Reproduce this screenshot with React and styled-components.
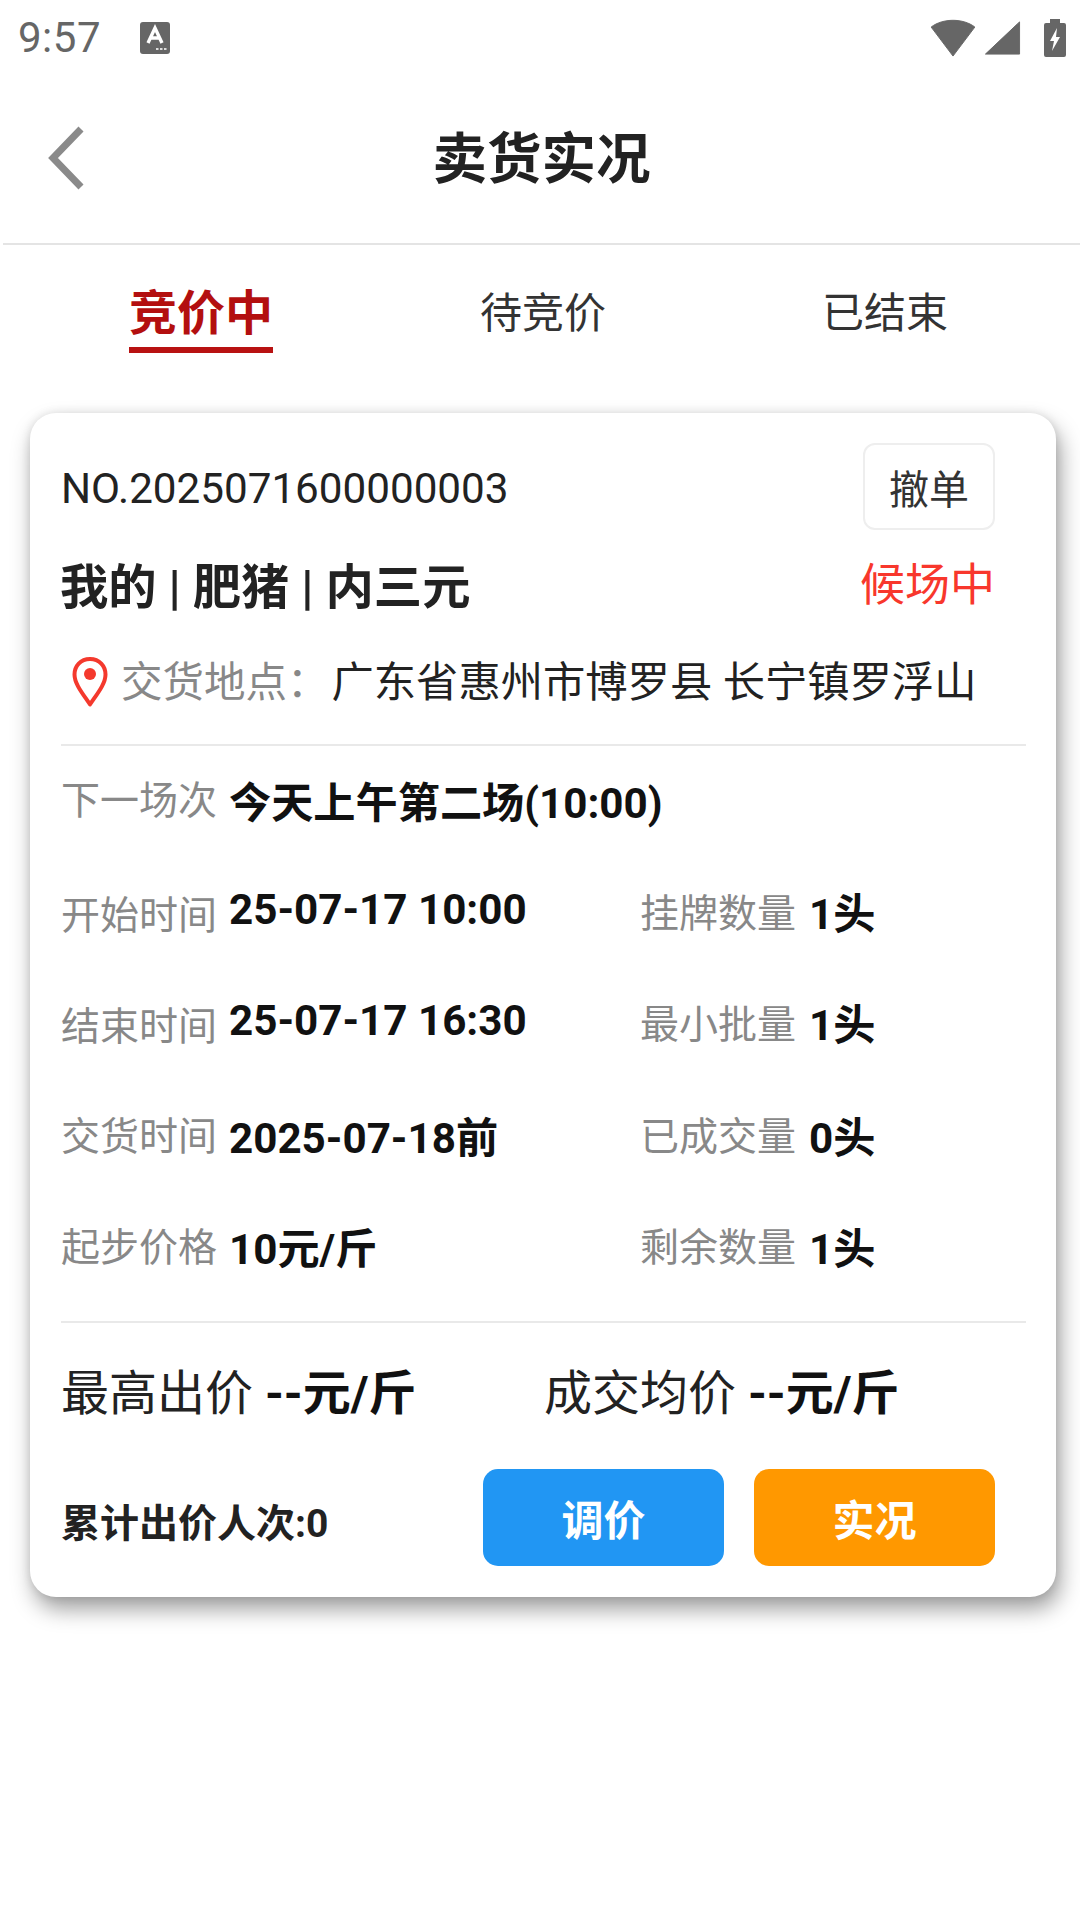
import React from "react";
import styled, { createGlobalStyle } from "styled-components";

const Global = createGlobalStyle`
  html, body { margin: 0; padding: 0; background: #fff; }
  body { font-family: Roboto, "Noto Sans CJK SC", sans-serif; color: #222; width: 1080px; height: 1920px; overflow: hidden; }
  * { box-sizing: border-box; }
`;

const Page = styled.div`width: 1080px; height: 1920px; background: #fff; display: flex; flex-direction: column;`;

const StatusBar = styled.div`height: 75px; display: flex; align-items: center; padding: 0 13px 0 18px; color: #666;`;
const Clock = styled.span`font-size: 42px; line-height: 75px; letter-spacing: .5px; width: 121px;`;
const StatusRight = styled.div`margin-left: auto; display: flex; align-items: center;`;
const Signal = styled.svg`margin-left: ${p => p.$gap || 0}px; display: block;`;

const Nav = styled.header`
  height: 170px; margin-left: 3px; border-bottom: 2px solid #e4e4e4;
  display: grid; grid-template-columns: 1fr auto 1fr; align-items: center;
`;
const Back = styled.svg`width: 40px; height: 64px; margin-left: 41px; margin-bottom: 3px; display: block;`;
const Title = styled.h1`margin: 0; font-size: 54.5px; line-height: 60px; font-weight: 700; color: #222;`;

const Tabs = styled.nav`height: 168px; padding: 38px 24px 0 30px; display: grid; grid-template-columns: repeat(3, 1fr); align-items: start; justify-items: center;`;
const Tab = styled.div`
  display: flex; flex-direction: column; align-items: center;
  font-size: ${p => (p.$active ? 48 : 42)}px;
  font-weight: ${p => (p.$active ? 700 : 400)};
  color: ${p => (p.$active ? "#b30f0f" : "#333")};
  line-height: 62px;
`;
const Underline = styled.span`display: block; width: 144px; height: 6px; background: #b81212; margin-top: 2px;`;

const Card = styled.section`
  width: 1026px; height: 1184px; margin-left: 30px; background: #fff; border-radius: 26px;
  box-shadow: 4px 12px 22px rgba(0,0,0,.38), 0 0 10px rgba(0,0,0,.1);
  padding: 30px 30px 31px 31px; display: flex; flex-direction: column;
`;
const HeadRow = styled.div`height: 87px; padding-right: 31px; display: flex; align-items: center; justify-content: space-between;`;
const OrderNo = styled.span`font-size: 42.2px; color: #222; line-height: 50px; margin-top: 5px;`;
const Revoke = styled.button`
  width: 132px; height: 87px; background: #fff; border: 2px solid #eee; border-radius: 12px;
  font: 400 40px Roboto, "Noto Sans CJK SC", sans-serif; color: #333; padding: 0;
`;
const TitleRow = styled.div`height: 60px; margin-top: 26px; padding-right: 31px; display: flex; align-items: center; justify-content: space-between;`;
const Product = styled.span`font-size: 48.3px; font-weight: 700; color: #222; line-height: 60px; margin-top: 4px; margin-left: -1px;`;
const State = styled.span`font-size: 45px; color: #f8372c; line-height: 60px;`;
const LocRow = styled.div`height: 50px; margin-top: 41px; padding-left: 11px; display: flex; align-items: center; font-size: 42.3px; line-height: 50px; color: #222; white-space: nowrap;`;
const Pin = styled.svg`width: 36px; height: 50px; margin-right: 13px; flex: none;`;
const LocLabel = styled.span`color: #888; font-size: 41.5px; margin-top: 2px;`;
const LocValue = styled.span`margin-top: 2px; margin-left: 3px;`;
const Rule = styled.hr`margin: ${p => p.$top}px 0 0; width: 965px; height: 2px; border: 0; background: #e9e9e9; flex: none;`;

const InfoRow = styled.div`height: 60px; margin-top: 26px; display: flex; align-items: center; white-space: nowrap;`;
const InfoGrid = styled.div`margin-top: 53px; display: grid; grid-template-columns: 168px 411px 169px auto; grid-auto-rows: 60px; row-gap: 51px; align-items: center; white-space: nowrap;`;
const Label = styled.span`
  font-size: 39px; line-height: 48px; color: #888; width: 168px;
  margin-top: ${p => p.$shift || 0}px;
`;
const Value = styled.span`
  font-size: 42.2px; line-height: 48px; font-weight: 700; color: #111;
  margin-top: ${p => p.$shift || 0}px;
`;

const Prices = styled.div`height: 60px; margin-top: 39px; display: grid; grid-template-columns: 483px auto; align-items: center; font-size: 48px; line-height: 60px; color: #222; white-space: nowrap; padding-top: 2px;`;
const PriceValue = styled.b`font-weight: 700; color: #111;`;

const Actions = styled.div`height: 97px; margin-top: 47px; padding-right: 31px; display: flex; align-items: center; white-space: nowrap;`;
const Bidders = styled.span`font-size: 39px; font-weight: 700; color: #222; margin-right: auto; margin-top: 5px;`;
const ActionBtn = styled.button`
  width: 241px; height: 97px; border: 0; border-radius: 15px; padding: 0; margin-left: ${p => p.$gap || 0}px;
  background: ${p => p.$bg}; color: #fff; font: 700 42px Roboto, "Noto Sans CJK SC", sans-serif;
`;

const rows = [
  ["开始时间", "25-07-17 10:00", "挂牌数量", "1头", 2, -11, -2, 0],
  ["结束时间", "25-07-17 16:30", "最小批量", "1头", 2, -11, -2, 0],
  ["交货时间", "2025-07-18前", "已成交量", "0头", -1, 3, -1, 3],
  ["起步价格", "10元/斤", "剩余数量", "1头", -1, 3, -1, 3],
];

export default function App() {
  return (
    <Page>
      <Global />
      <StatusBar>
        <Clock>9:57</Clock>
        <svg width="32" height="34" viewBox="0 0 32 34">
          <rect x="1" y="1" width="30" height="32" rx="3" fill="#666" />
          <path d="M9 22 L16 7 L23 22 M11.5 17 H20.5" fill="none" stroke="#fff" strokeWidth="3.4" />
          <path d="M17 28 H28" stroke="#ddd" strokeWidth="2" strokeDasharray="2.5 1.5" />
        </svg>
        <StatusRight>
          <svg width="48" height="38" viewBox="0 0 48 40">
            <path d="M1 8.5 C13-1 35-1 47 8.5 L24 39 Z" fill="#666" stroke="#666" strokeLinejoin="round" />
          </svg>
          <Signal $gap={7} width="37" height="36" viewBox="0 0 38 38">
            <path d="M37 2 V36 H1 Z" fill="#666" stroke="#666" strokeLinejoin="round" />
          </Signal>
          <Signal $gap={22} width="24" height="40" viewBox="0 0 24 40">
            <path d="M7 1 H17 V5 H21 Q23 5 23 7 V37 Q23 39 21 39 H3 Q1 39 1 37 V7 Q1 5 3 5 H7 Z" fill="#666" />
            <path d="M14 10 L7 23 H11 L9 33 L17 19 H13 Z" fill="#fff" />
          </Signal>
        </StatusRight>
      </StatusBar>

      <Nav>
        <Back viewBox="0 0 40 64">
          <path d="M37 3 L9 32 L37 61" fill="none" stroke="#8a8a8a" strokeWidth="7" />
        </Back>
        <Title>卖货实况</Title>
      </Nav>

      <Tabs>
        <Tab $active>竞价中<Underline /></Tab>
        <Tab>待竞价</Tab>
        <Tab>已结束</Tab>
      </Tabs>

      <Card>
        <HeadRow>
          <OrderNo>NO.2025071600000003</OrderNo>
          <Revoke>撤单</Revoke>
        </HeadRow>
        <TitleRow>
          <Product>我的 | 肥猪 | 内三元</Product>
          <State>候场中</State>
        </TitleRow>
        <LocRow>
          <Pin viewBox="0 0 36 50">
            <path d="M18 2 C8.5 2 2.5 9 2.5 17.5 C2.5 27 11 37 18 47.5 C25 37 33.5 27 33.5 17.5 C33.5 9 27.5 2 18 2 Z" fill="none" stroke="#f4392d" strokeWidth="4" strokeLinejoin="round" />
            <circle cx="18" cy="17" r="6" fill="#f4392d" />
          </Pin>
          <LocLabel>交货地点：</LocLabel>
          <LocValue>广东省惠州市博罗县 长宁镇罗浮山</LocValue>
        </LocRow>
        <Rule $top={37} />
        <InfoRow>
          <Label $shift={-2}>下一场次</Label>
          <Value $shift={4}>今天上午第二场(10:00)</Value>
        </InfoRow>
        <InfoGrid>
          {rows.map(([a, b, c, d, s1, s2, s3, s4]) => (
            <React.Fragment key={a}>
              <Label $shift={s1}>{a}</Label>
              <Value $shift={s2}>{b}</Value>
              <Label $shift={s3}>{c}</Label>
              <Value $shift={s4}>{d}</Value>
            </React.Fragment>
          ))}
        </InfoGrid>
        <Rule $top={43} />
        <Prices>
          <span>最高出价 <PriceValue>--元/斤</PriceValue></span>
          <span>成交均价 <PriceValue>--元/斤</PriceValue></span>
        </Prices>
        <Actions>
          <Bidders>累计出价人次:0</Bidders>
          <ActionBtn $bg="#2196f3">调价</ActionBtn>
          <ActionBtn $bg="#ff9800" $gap={30}>实况</ActionBtn>
        </Actions>
      </Card>
    </Page>
  );
}
